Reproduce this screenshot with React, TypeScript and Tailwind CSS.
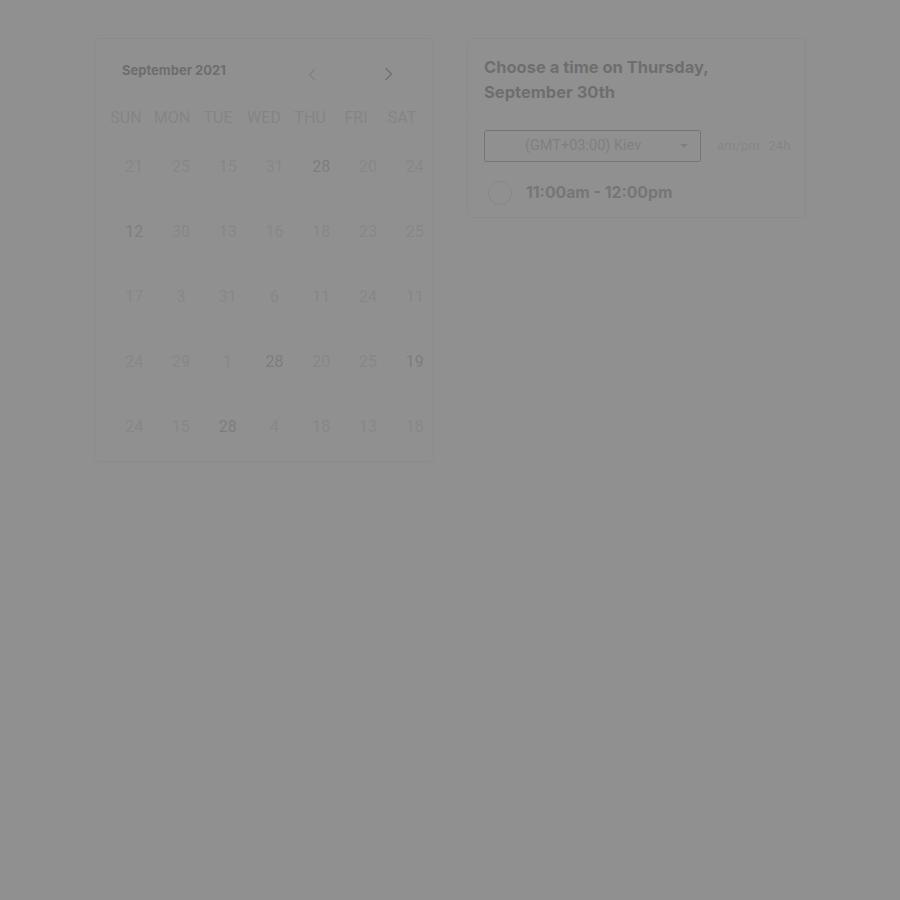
const weekdays = ["Sun", "Mon", "Tue", "Wed", "Thu", "Fri", "Sat"];

// true = day can be picked (shown darker)
const weeks: [number, boolean][][] = [
  [[21, false], [25, false], [15, false], [31, false], [28, true], [20, false], [24, false]],
  [[12, true], [30, false], [13, false], [16, false], [18, false], [23, false], [25, false]],
  [[17, false], [3, false], [31, false], [6, false], [11, false], [24, false], [11, false]],
  [[24, false], [29, false], [1, false], [28, true], [20, false], [25, false], [19, true]],
  [[24, false], [15, false], [28, true], [4, false], [18, false], [13, false], [18, false]],
];

const Calendar = () => (
  <div className="w-[340px] h-[424px] shrink-0 bg-white border border-[#e2e2e2] rounded-[4px] font-['Roboto',sans-serif]">
    <div className="h-[64px] flex items-center pl-[27px]">
      <span className="w-[184px] shrink-0 whitespace-nowrap font-['Inter',sans-serif] font-bold text-[13px] text-[#404040]">
        September 2021
      </span>
      <button className="w-[12px] h-[14px] mt-[6px] flex items-center justify-center text-[#b4b4b4]">
        <svg width="8" height="13" viewBox="0 0 8 13" fill="none" stroke="currentColor" strokeWidth="1.4">
          <path d="M7 1L1.5 6.5L7 12" />
        </svg>
      </button>
      <button className="ml-[64px] w-[12px] h-[14px] mt-[6px] flex items-center justify-center text-[#555]">
        <svg width="9" height="14" viewBox="0 0 9 14" fill="none" stroke="currentColor" strokeWidth="1.5">
          <path d="M1.5 1L7.5 7L1.5 13" />
        </svg>
      </button>
    </div>
    <div className="h-[30px] ml-[8px] w-[322px] grid grid-cols-7 items-center">
      {weekdays.map((d) => (
        <div key={d} className="text-center uppercase text-[16px] text-[#bdbdbd]">
          {d}
        </div>
      ))}
    </div>
    <div className="mt-[1px] ml-[16px] w-[327px]">
      {weeks.map((row, i) => (
        <div key={i} className="h-[65px] grid grid-cols-7 items-center">
          {row.map(([n, on], j) => (
            <div
              key={j}
              className={
                on
                  ? "text-center text-[16px] text-[#959595]"
                  : "text-center text-[16px] text-[#cacaca]"
              }
            >
              {n}
            </div>
          ))}
        </div>
      ))}
    </div>
  </div>
);

const TimePanel = () => (
  <div className="w-[339px] h-[180px] shrink-0 bg-white border border-[#e2e2e2] rounded-[4px]">
    <div className="h-[80px] px-[16px] pt-[16px] border-b border-[#f0f0f0]">
      <h2 className="font-['Inter',sans-serif] font-bold text-[16.5px] leading-[25px] text-[#444]">
        Choose a time on Thursday,
        <br />
        September 30th
      </h2>
    </div>
    <div className="flex items-center pl-[16px] pt-[11px] font-['Roboto',sans-serif]">
      <div className="w-[217px] h-[32px] border border-[#666] rounded-[3px] flex items-center pl-[40px] pr-[12px]">
        <span className="text-[14.5px] text-[#a2a2a2]">(GMT+03:00) Kiev</span>
        <svg className="ml-auto" width="8" height="4" viewBox="0 0 8 4">
          <path d="M0 0H8L4 4Z" fill="#a2a2a2" />
        </svg>
      </div>
      <div className="ml-[16px] text-[13px] text-[#c4c4c4] flex gap-[9px]">
        <span>am/pm</span>
        <span>24h</span>
      </div>
    </div>
    <div className="flex items-center pl-[20px] pt-[19px]">
      <div className="w-[24px] h-[24px] rounded-full border-[1.5px] border-[#c4c4c4]" />
      <span className="ml-[14px] font-['Inter',sans-serif] font-bold text-[15.8px] text-[#6e6e6e]">
        11:00am - 12:00pm
      </span>
    </div>
  </div>
);

export default function App() {
  return (
    <div className="min-h-[900px] bg-white">
      <div className="flex justify-center gap-[33px] pt-[38px]">
        <Calendar />
        <TimePanel />
      </div>
      {/* dimming layer over the whole page */}
      <div className="fixed inset-0 bg-[rgba(119,119,119,0.82)]" />
    </div>
  );
}
